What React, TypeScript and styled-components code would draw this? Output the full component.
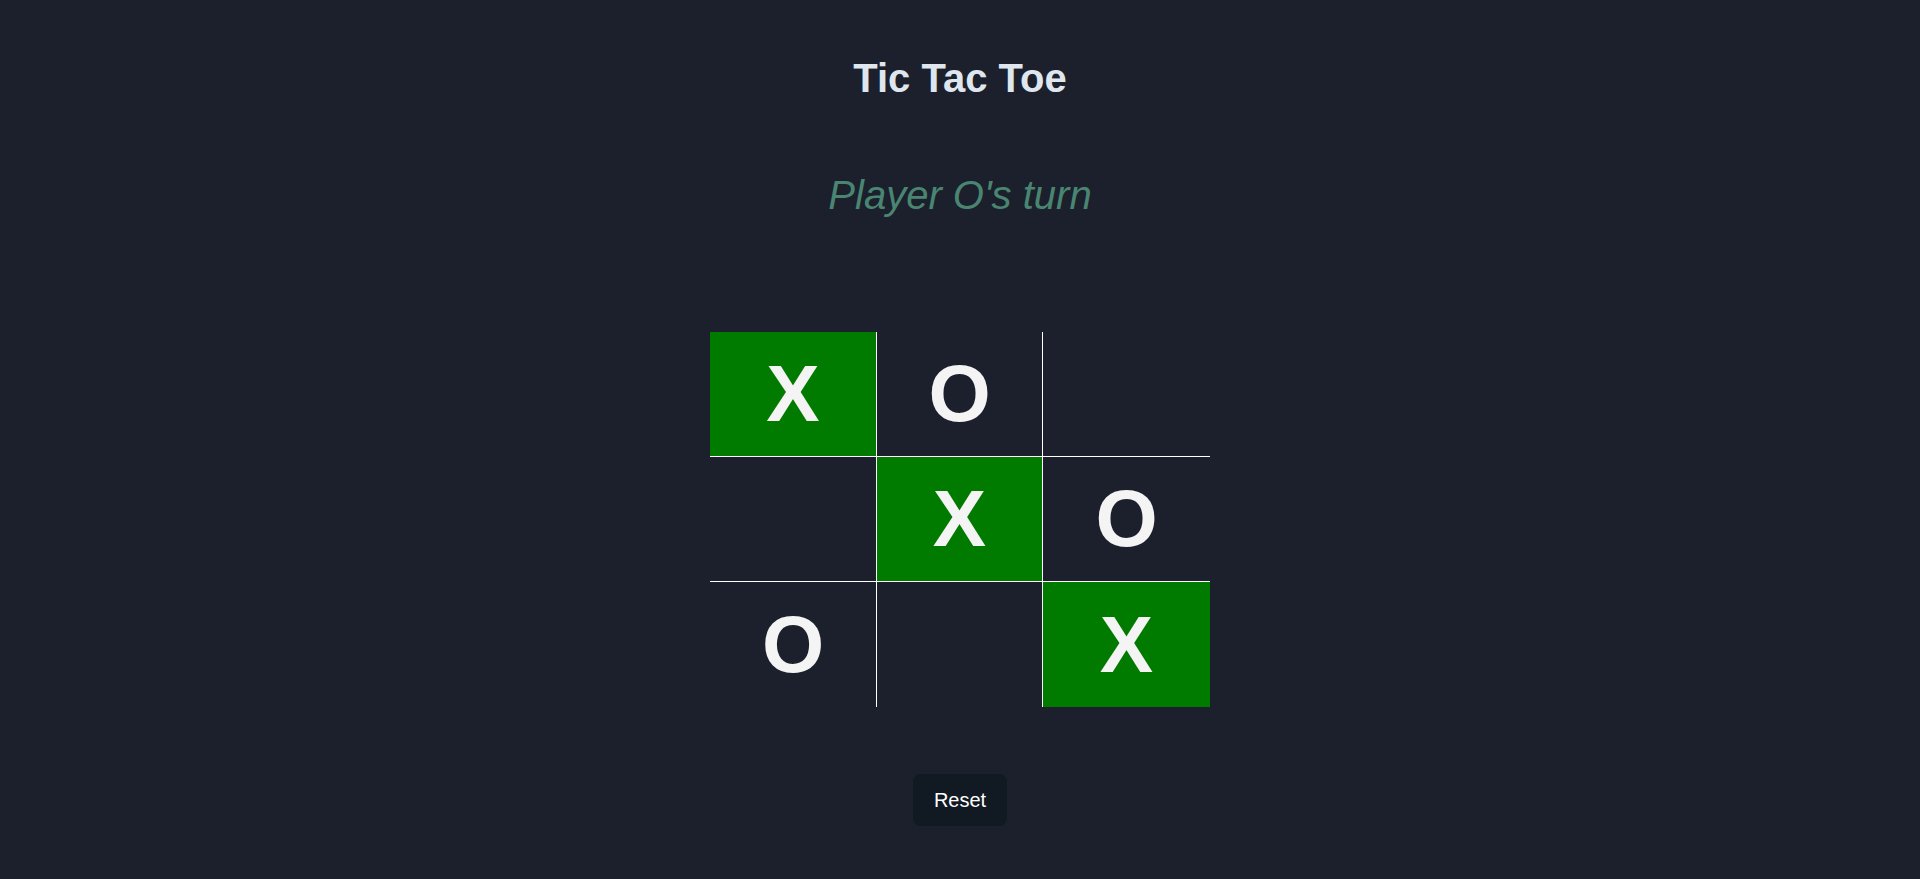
import React, { useState } from "react";
import styled, { createGlobalStyle } from "styled-components";

const GlobalStyle = createGlobalStyle`
  html, body {
    margin: 0;
    padding: 0;
    background: #1b202c;
    font-family: "Liberation Sans", Arial, sans-serif;
  }
  #root { min-height: 879px; }
`;

const Page = styled.main`
  display: flex;
  flex-direction: column;
  align-items: center;
  min-height: 879px;
  background: #1b202c;
  padding-top: 55px;
  box-sizing: border-box;
`;

const Title = styled.h1`
  margin: 0;
  font-size: 40px;
  line-height: 46px;
  font-weight: 700;
  color: #dfe6ee;
`;

const Status = styled.h2`
  margin: 71px 0 0;
  font-size: 40px;
  line-height: 46px;
  font-weight: 400;
  font-style: italic;
  color: #4a8572;
`;

const Board = styled.div`
  margin-top: 114px;
  width: 500px;
  display: grid;
  grid-template-columns: 167px 166px 167px;
  grid-template-rows: 125px 125px 125px;
`;

const Cell = styled.button<{ $win: boolean; $right: boolean; $bottom: boolean }>`
  display: flex;
  align-items: center;
  justify-content: center;
  padding: 0;
  margin: 0;
  border: none;
  border-right: ${(p) => (p.$right ? "1px solid #ffffff" : "none")};
  border-bottom: ${(p) => (p.$bottom ? "1px solid #ffffff" : "none")};
  background: ${(p) => (p.$win ? "#007b00" : "transparent")};
  color: #f4f4f4;
  font-family: "Liberation Sans", Arial, sans-serif;
  font-size: 80px;
  font-weight: 700;
  cursor: pointer;
`;

const ResetButton = styled.button`
  margin-top: 67px;
  padding: 14px 21px;
  border: none;
  border-radius: 8px;
  background: #111922;
  color: #ffffff;
  font-family: "Liberation Sans", Arial, sans-serif;
  font-size: 20px;
  line-height: 24px;
  cursor: pointer;
`;

const initial = ["X", "O", "", "", "X", "O", "O", "", "X"];
const winLine = [0, 4, 8];

export default function App() {
  const [cells, setCells] = useState<string[]>(initial);
  return (
    <>
      <GlobalStyle />
      <Page>
        <Title>Tic Tac Toe</Title>
        <Status>Player O's turn</Status>
        <Board>
          {cells.map((v, i) => (
            <Cell
              key={i}
              $win={winLine.includes(i)}
              $right={i % 3 !== 2}
              $bottom={i < 6}
            >
              {v}
            </Cell>
          ))}
        </Board>
        <ResetButton onClick={() => setCells(Array(9).fill(""))}>Reset</ResetButton>
      </Page>
    </>
  );
}
